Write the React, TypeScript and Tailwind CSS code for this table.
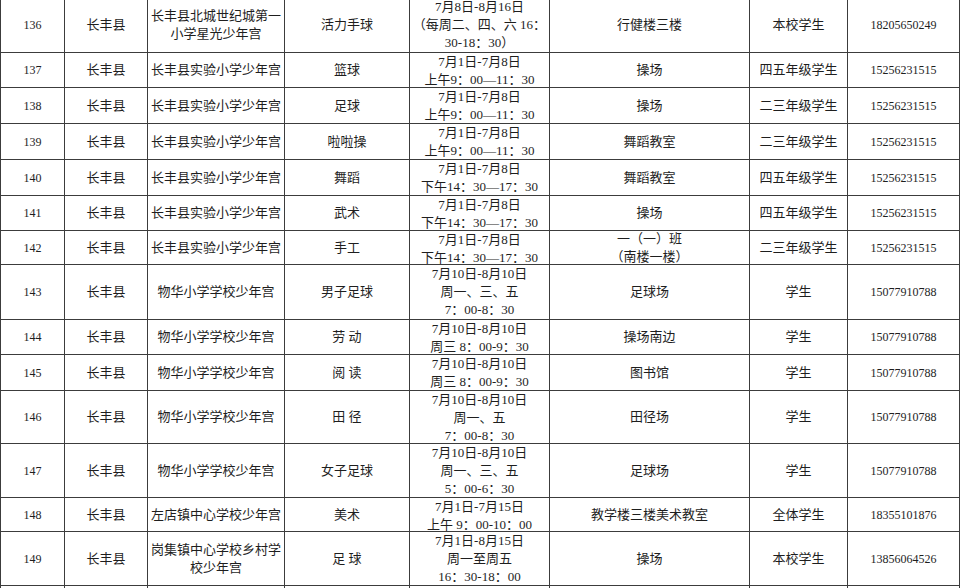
type Row = {
  no: string;
  county: string;
  school: string;
  activity: string;
  time: string[];
  place: string[];
  target: string;
  phone: string;
  h: string;
};

const rows: Row[] = [
  {
    no: "136",
    county: "长丰县",
    school: "长丰县北城世纪城第一小学星光少年宫",
    activity: "活力手球",
    time: ["7月8日-8月16日", "（每周二、四、六 16：", "30-18：30）"],
    place: ["行健楼三楼"],
    target: "本校学生",
    phone: "18205650249",
    h: "h-[55px]",
  },
  {
    no: "137",
    county: "长丰县",
    school: "长丰县实验小学少年宫",
    activity: "篮球",
    time: ["7月1日-7月8日", "上午9：00—11：30"],
    place: ["操场"],
    target: "四五年级学生",
    phone: "15256231515",
    h: "h-[35px]",
  },
  {
    no: "138",
    county: "长丰县",
    school: "长丰县实验小学少年宫",
    activity: "足球",
    time: ["7月1日-7月8日", "上午9：00—11：30"],
    place: ["操场"],
    target: "二三年级学生",
    phone: "15256231515",
    h: "h-[36px]",
  },
  {
    no: "139",
    county: "长丰县",
    school: "长丰县实验小学少年宫",
    activity: "啦啦操",
    time: ["7月1日-7月8日", "上午9：00—11：30"],
    place: ["舞蹈教室"],
    target: "二三年级学生",
    phone: "15256231515",
    h: "h-[36px]",
  },
  {
    no: "140",
    county: "长丰县",
    school: "长丰县实验小学少年宫",
    activity: "舞蹈",
    time: ["7月1日-7月8日", "下午14：30—17：30"],
    place: ["舞蹈教室"],
    target: "四五年级学生",
    phone: "15256231515",
    h: "h-[36px]",
  },
  {
    no: "141",
    county: "长丰县",
    school: "长丰县实验小学少年宫",
    activity: "武术",
    time: ["7月1日-7月8日", "下午14：30—17：30"],
    place: ["操场"],
    target: "四五年级学生",
    phone: "15256231515",
    h: "h-[35px]",
  },
  {
    no: "142",
    county: "长丰县",
    school: "长丰县实验小学少年宫",
    activity: "手工",
    time: ["7月1日-7月8日", "下午14：30—17：30"],
    place: ["一（一）班", "（南楼一楼）"],
    target: "二三年级学生",
    phone: "15256231515",
    h: "h-[34px]",
  },
  {
    no: "143",
    county: "长丰县",
    school: "物华小学学校少年宫",
    activity: "男子足球",
    time: ["7月10日-8月10日", "周一、三、五", "7：00-8：30"],
    place: ["足球场"],
    target: "学生",
    phone: "15077910788",
    h: "h-[55px]",
  },
  {
    no: "144",
    county: "长丰县",
    school: "物华小学学校少年宫",
    activity: "劳 动",
    time: ["7月10日-8月10日", "周三 8：00-9：30"],
    place: ["操场南边"],
    target: "学生",
    phone: "15077910788",
    h: "h-[35px]",
  },
  {
    no: "145",
    county: "长丰县",
    school: "物华小学学校少年宫",
    activity: "阅 读",
    time: ["7月10日-8月10日", "周三 8：00-9：30"],
    place: ["图书馆"],
    target: "学生",
    phone: "15077910788",
    h: "h-[36px]",
  },
  {
    no: "146",
    county: "长丰县",
    school: "物华小学学校少年宫",
    activity: "田 径",
    time: ["7月10日-8月10日", "周一、五", "7：00-8：30"],
    place: ["田径场"],
    target: "学生",
    phone: "15077910788",
    h: "h-[53px]",
  },
  {
    no: "147",
    county: "长丰县",
    school: "物华小学学校少年宫",
    activity: "女子足球",
    time: ["7月10日-8月10日", "周一、三、五", "5：00-6：30"],
    place: ["足球场"],
    target: "学生",
    phone: "15077910788",
    h: "h-[54px]",
  },
  {
    no: "148",
    county: "长丰县",
    school: "左店镇中心学校少年宫",
    activity: "美术",
    time: ["7月1日-7月15日", "上午 9：00-10：00"],
    place: ["教学楼三楼美术教室"],
    target: "全体学生",
    phone: "18355101876",
    h: "h-[34px]",
  },
  {
    no: "149",
    county: "长丰县",
    school: "岗集镇中心学校乡村学校少年宫",
    activity: "足 球",
    time: ["7月1日-8月15日", "周一至周五", "16：30-18：00"],
    place: ["操场"],
    target: "本校学生",
    phone: "13856064526",
    h: "h-[54px]",
  },
  // next row only peeks in at the bottom edge
  {
    no: "",
    county: "",
    school: "",
    activity: "",
    time: ["7月1日-8月15日"],
    place: [],
    target: "",
    phone: "",
    h: "h-[54px]",
  },
];

const cell =
  "flex shrink-0 flex-col items-center border-r border-[#3c3c3c] text-center";

function Lines({ lines }: { lines: string[] }) {
  return (
    <>
      {lines.map((l, i) => (
        <span key={i} className="whitespace-pre">
          {l}
        </span>
      ))}
    </>
  );
}

export default function App() {
  return (
    <div className="h-[588px] w-[960px] overflow-hidden bg-white">
      <div
        className="-mt-[3px] border-l border-t border-[#3c3c3c] text-[13px] leading-[18px] text-[#1e1e1e]"
        style={{ fontFamily: '"Liberation Serif", "Noto Sans CJK SC", serif' }}
      >
        {rows.map((r, idx) => (
          <div key={idx} className={`flex border-b border-[#3c3c3c] ${r.h}`}>
            <div className={`${cell} w-[64px] justify-center text-[12px]`}>{r.no}</div>
            <div className={`${cell} w-[83px] justify-center`}>{r.county}</div>
            <div className={`${cell} w-[137px] justify-center px-[2px]`}>{r.school}</div>
            <div className={`${cell} w-[125px] justify-center`}>{r.activity}</div>
            <div className={`${cell} w-[140px] justify-start`}>
              <Lines lines={r.time} />
            </div>
            <div className={`${cell} w-[200px] justify-center`}>
              <Lines lines={r.place} />
            </div>
            <div className={`${cell} w-[98px] justify-center`}>{r.target}</div>
            <div className={`${cell} w-[112px] justify-center text-[12px]`}>{r.phone}</div>
          </div>
        ))}
      </div>
    </div>
  );
}
